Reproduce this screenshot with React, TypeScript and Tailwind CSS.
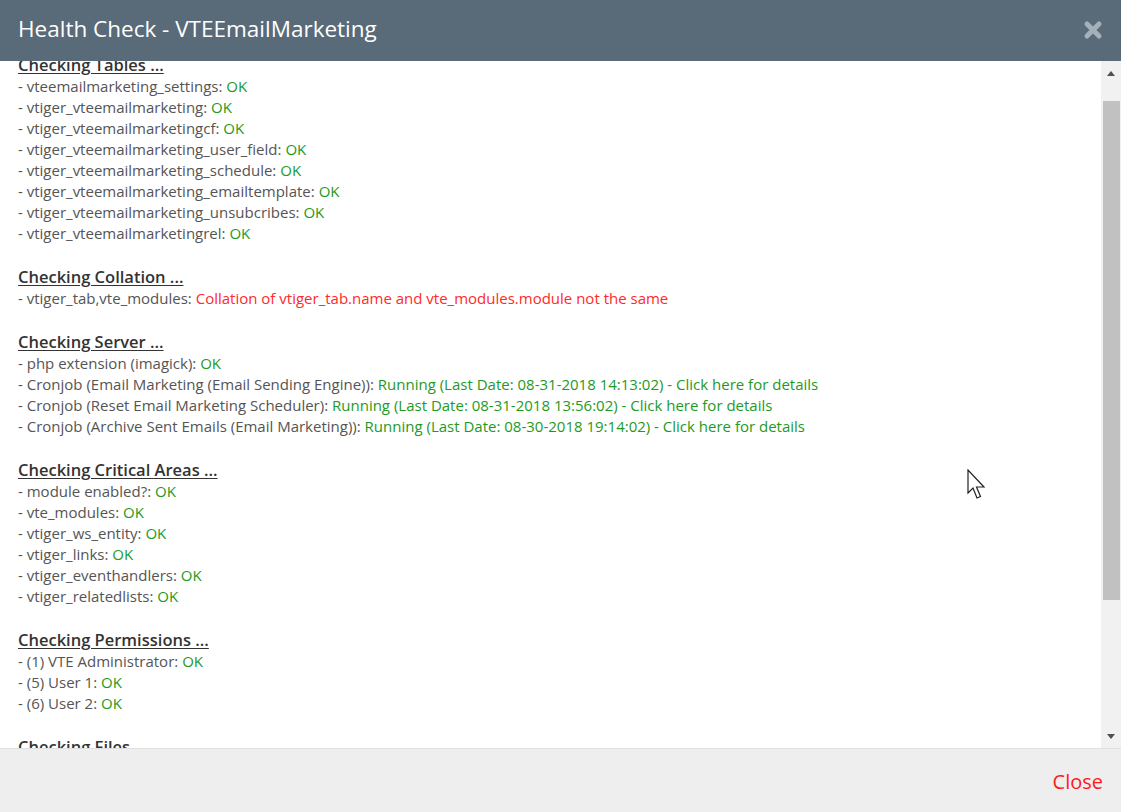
import React from "react";

type Item = { label: string; value: string; tone?: "ok" | "err" };
type Section = { title: string; items: Item[] };

const sections: Section[] = [
  {
    title: "Checking Tables ...",
    items: [
      { label: "vteemailmarketing_settings", value: "OK" },
      { label: "vtiger_vteemailmarketing", value: "OK" },
      { label: "vtiger_vteemailmarketingcf", value: "OK" },
      { label: "vtiger_vteemailmarketing_user_field", value: "OK" },
      { label: "vtiger_vteemailmarketing_schedule", value: "OK" },
      { label: "vtiger_vteemailmarketing_emailtemplate", value: "OK" },
      { label: "vtiger_vteemailmarketing_unsubcribes", value: "OK" },
      { label: "vtiger_vteemailmarketingrel", value: "OK" },
    ],
  },
  {
    title: "Checking Collation ...",
    items: [
      {
        label: "vtiger_tab,vte_modules",
        value: "Collation of vtiger_tab.name and vte_modules.module not the same",
        tone: "err",
      },
    ],
  },
  {
    title: "Checking Server ...",
    items: [
      { label: "php extension (imagick)", value: "OK" },
      {
        label: "Cronjob (Email Marketing (Email Sending Engine))",
        value: "Running (Last Date: 08-31-2018 14:13:02) - Click here for details",
      },
      {
        label: "Cronjob (Reset Email Marketing Scheduler)",
        value: "Running (Last Date: 08-31-2018 13:56:02) - Click here for details",
      },
      {
        label: "Cronjob (Archive Sent Emails (Email Marketing))",
        value: "Running (Last Date: 08-30-2018 19:14:02) - Click here for details",
      },
    ],
  },
  {
    title: "Checking Critical Areas ...",
    items: [
      { label: "module enabled?", value: "OK" },
      { label: "vte_modules", value: "OK" },
      { label: "vtiger_ws_entity", value: "OK" },
      { label: "vtiger_links", value: "OK" },
      { label: "vtiger_eventhandlers", value: "OK" },
      { label: "vtiger_relatedlists", value: "OK" },
    ],
  },
  {
    title: "Checking Permissions ...",
    items: [
      { label: "(1) VTE Administrator", value: "OK" },
      { label: "(5) User 1", value: "OK" },
      { label: "(6) User 2", value: "OK" },
    ],
  },
  {
    title: "Checking Files",
    items: [
      { label: "modules/VTEEmailMarketing", value: "OK" },
      { label: "layouts/v7/modules/VTEEmailMarketing", value: "OK" },
    ],
  },
];

export default function App() {
  return (
    <div
      className="relative flex h-[812px] w-[1121px] flex-col overflow-hidden bg-white text-[#333]"
      style={{ fontFamily: '"Open Sans", "Noto Sans", sans-serif' }}
    >
      <div className="flex h-[61px] shrink-0 items-center justify-between bg-[#596a79] pl-[18px] pr-[18px]">
        <h3 className="-mt-[2px] text-[22.5px] leading-none text-white">Health Check - VTEEmailMarketing</h3>
        <svg width="20" height="20" viewBox="0 0 20 20" className="-mt-[1px] text-[#a5b0ba]">
          <path d="M4 4 L16 16 M16 4 L4 16" stroke="currentColor" strokeWidth="5" strokeLinecap="round" />
        </svg>
      </div>

      <div className="flex h-[687px] shrink-0">
        <div className="flex-1 overflow-hidden pl-[18px]">
          <div className="-mt-[7px]">
            {sections.map((s, i) => (
              <div key={s.title} className={i > 0 ? "mt-[22px]" : ""}>
                <div className="text-[16.5px] font-semibold leading-[21px] text-[#333] underline underline-offset-2">
                  {s.title}
                </div>
                <div className="pt-[1px]">
                  {s.items.map((it) => (
                    <div key={it.label} className="text-[15px] leading-[21px] text-[#555]">
                      - {it.label}:{" "}
                      <span className={it.tone === "err" ? "text-[#ff2a2a]" : "text-[#1e9a1e]"}>{it.value}</span>
                    </div>
                  ))}
                </div>
              </div>
            ))}
          </div>
        </div>
        <div className="flex w-[20px] shrink-0 flex-col items-center bg-[#f1f1f1]">
          <div className="flex h-[24px] items-center justify-center">
            <div className="h-0 w-0 border-x-[4px] border-b-[5px] border-x-transparent border-b-[#505050]" />
          </div>
          <div className="mt-[16px] h-[499px] w-[17px] bg-[#c1c1c1]" />
          <div className="flex-1" />
          <div className="flex h-[24px] items-center justify-center">
            <div className="h-0 w-0 border-x-[4px] border-t-[5px] border-x-transparent border-t-[#505050]" />
          </div>
        </div>
      </div>

      <div className="flex flex-1 items-center justify-end border-t border-[#e0e0e0] bg-[#eeeeee] pr-[18px] pt-[3px]">
        <button className="text-[20px] text-[#ff1a1a]">Close</button>
      </div>

      <svg className="absolute left-[967px] top-[469px]" width="20" height="32" viewBox="0 0 20 32">
        <path d="M1 1 L1 24 L6 19 L10 29 L13.5 27.5 L9.5 18 L17 18 Z" fill="white" stroke="#222" strokeWidth="1.2" strokeLinejoin="miter" />
      </svg>
    </div>
  );
}
